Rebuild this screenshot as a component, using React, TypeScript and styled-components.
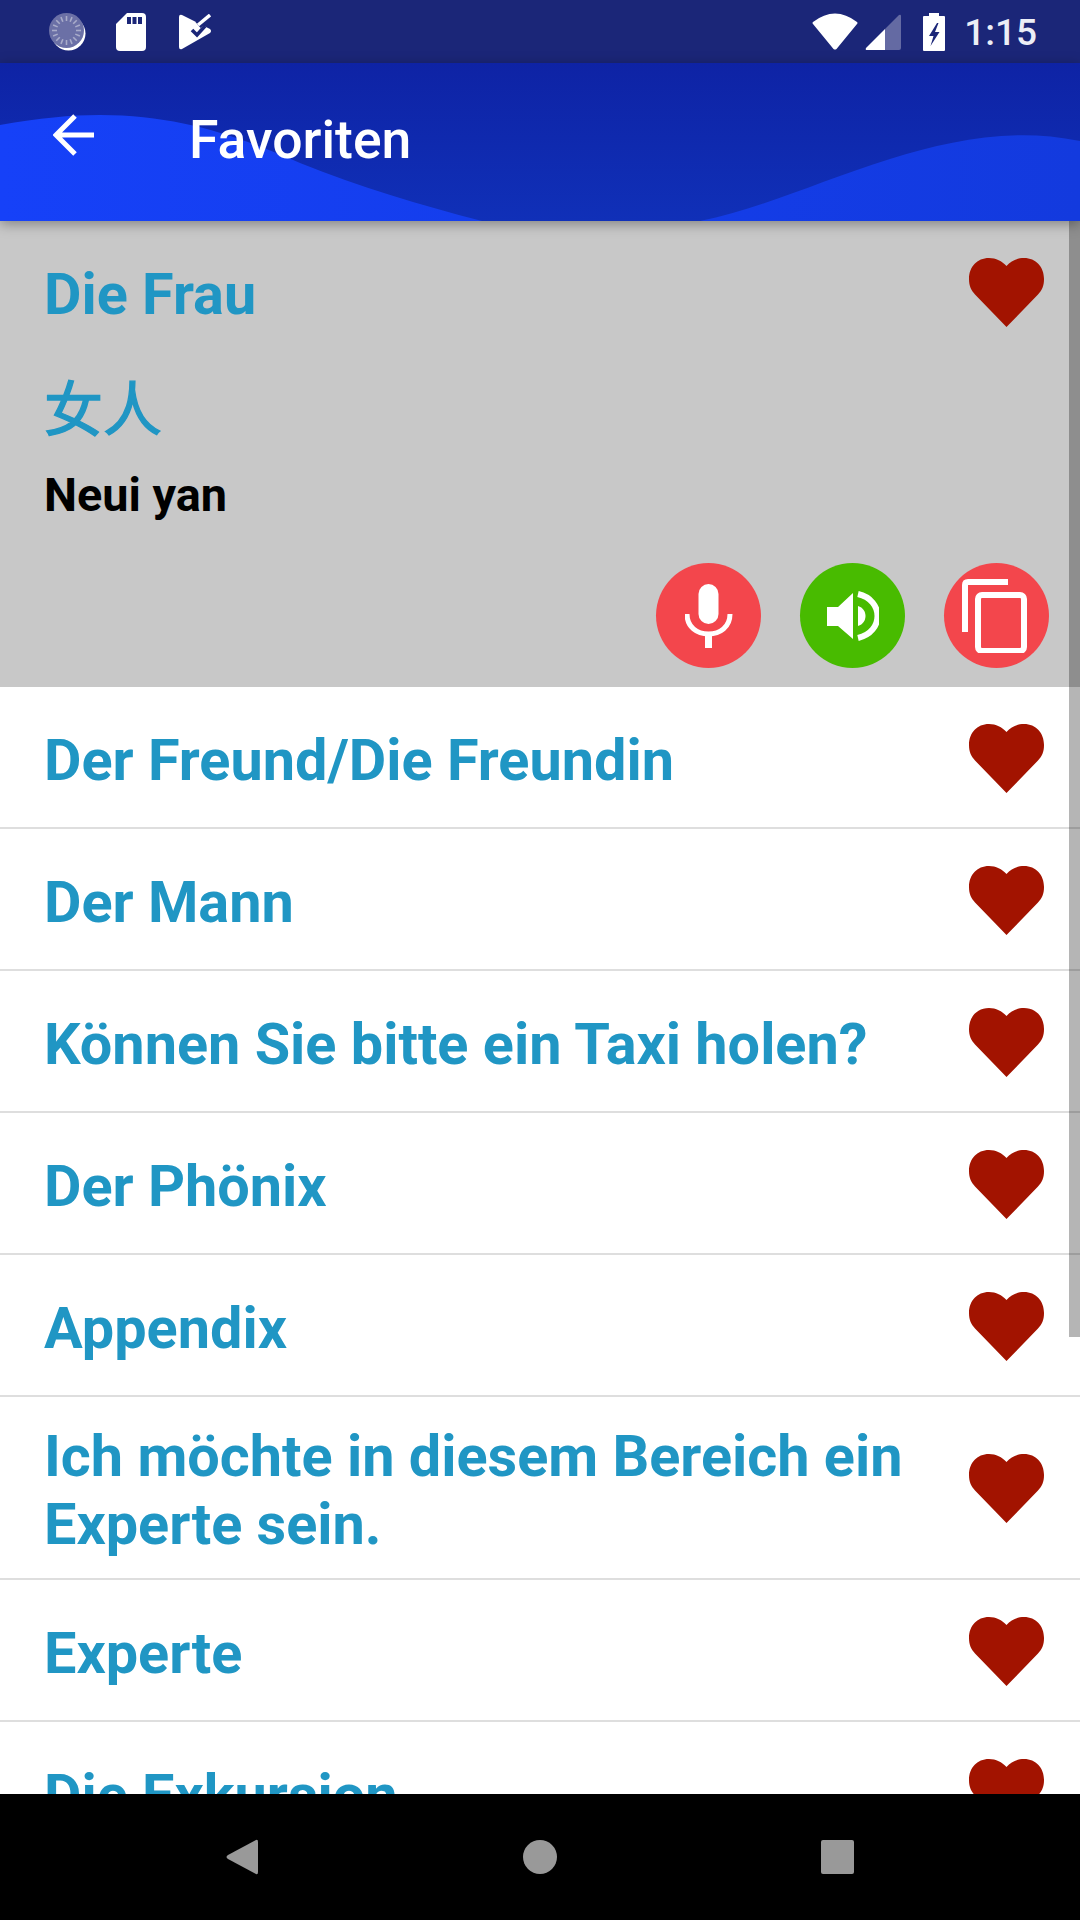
import styled, { createGlobalStyle } from "styled-components";

const GlobalStyle = createGlobalStyle`
  html, body {
    margin: 0;
    padding: 0;
    background: #fff;
    font-family: Roboto, "Liberation Sans", sans-serif;
  }
`;

const phrases = [
  { id: 1, text: "Der Freund/Die Freundin" },
  { id: 2, text: "Der Mann" },
  { id: 3, text: "Können Sie bitte ein Taxi holen?" },
  { id: 4, text: "Der Phönix" },
  { id: 5, text: "Appendix" },
  { id: 6, text: "Ich möchte in diesem Bereich ein Experte sein." },
  { id: 7, text: "Experte" },
  { id: 8, text: "Die Exkursion" },
];

export default function App() {
  return (
    <Phone>
      <GlobalStyle />
      <StatusBar>
        <StatusGroup>
          <SyncIcon />
          <SdIcon />
          <TaskIcon />
        </StatusGroup>
        <StatusRight>
          <WifiIcon />
          <SignalIcon />
          <BatteryIcon />
          <Clock>1:15</Clock>
        </StatusRight>
      </StatusBar>

      <Toolbar>
        <Wave viewBox="0 0 1080 158" preserveAspectRatio="none">
          <defs>
            <linearGradient id="waveLight" x1="0" x2="1" y1="0" y2="0">
              <stop offset="0" stopColor="#1641f8" />
              <stop offset="1" stopColor="#133ade" />
            </linearGradient>
          </defs>
          <path
            d="M0 62 C40 55 70 52 100 52 C180 52 240 74 300 100 C360 124 420 142 482 158 L700 158 C760 146 820 118 890 96 C950 78 1010 64 1080 78 L1080 158 L0 158 Z"
            fill="url(#waveLight)"
          />
        </Wave>
        <BackIcon />
        <Title>Favoriten</Title>
      </Toolbar>

      <List>
        <SelectedCard>
          <PhraseRow $bare>
            <PhraseText>Die Frau</PhraseText>
            <HeartIcon />
          </PhraseRow>
          <Translation>女人</Translation>
          <Romanization>Neui yan</Romanization>
          <Actions>
            <RoundButton $color="#f3464c"><MicIcon /></RoundButton>
            <RoundButton $color="#48bb00"><SpeakerIcon /></RoundButton>
            <RoundButton $color="#f3464c"><CopyIcon /></RoundButton>
          </Actions>
        </SelectedCard>
        {phrases.map(phrase => (
          <PhraseRow key={phrase.id}>
            <PhraseText>{phrase.text}</PhraseText>
            <HeartIcon />
          </PhraseRow>
        ))}
        <ScrollThumb />
      </List>

      <NavBar>
        <svg width="34" height="36" viewBox="0 0 34 36">
          <path d="M31 1 L3 16 Q0 18 3 20 L31 35 Q33 36 33 33 L33 3 Q33 0 31 1 Z" fill="#999" />
        </svg>
        <svg width="34" height="34" viewBox="0 0 34 34">
          <circle cx="17" cy="17" r="17" fill="#999" />
        </svg>
        <svg width="34" height="34" viewBox="0 0 34 34">
          <rect width="33" height="34" rx="2" fill="#999" />
        </svg>
      </NavBar>
    </Phone>
  );
}

function SyncIcon() {
  const ticks = Array.from({ length: 16 }, (_, i) => (i * 360) / 16);
  return (
    <svg width="37" height="38" viewBox="0 0 37 38">
      <circle cx="19.5" cy="20.5" r="17" fill="#fff" />
      <circle cx="17.5" cy="17.5" r="17.5" fill="#6b70a6" />
      {ticks.map(angle => (
        <line
          key={angle}
          x1="17.5"
          y1="3"
          x2="17.5"
          y2="8"
          stroke="#a9acca"
          strokeWidth="1.6"
          transform={`rotate(${angle} 17.5 17.5)`}
        />
      ))}
    </svg>
  );
}

function SdIcon() {
  return (
    <svg width="30" height="38" viewBox="0 0 30 38">
      <path d="M11 0 H26 Q30 0 30 4 V34 Q30 38 26 38 H4 Q0 38 0 34 V11 Z" fill="#fff" />
      <path d="M11 4 H15 V11 H11 Z M16.5 4 H20.5 V11 H16.5 Z M22 4 H26 V11 H22 Z" fill="#1b2678" />
    </svg>
  );
}

function TaskIcon() {
  return (
    <svg width="35" height="36" viewBox="-3 0 35 36">
      <path d="M0 3 Q0 0 3 1 L31 15 Q33 17 31 19 L3 35 Q0 36 0 33 Z" fill="#fff" />
      <path d="M13 16 L18 21 L26 12" fill="none" stroke="#1b2678" strokeWidth="3.6" />
      <path d="M19 11 L31 1" fill="none" stroke="#1b2678" strokeWidth="8" />
      <path d="M19 11 L31 1" fill="none" stroke="#fff" strokeWidth="3.4" />
    </svg>
  );
}

function WifiIcon() {
  return (
    <svg width="46" height="37" viewBox="0 0 46 37">
      <path d="M1 9 Q23 -8 45 9 Q46 10 45 11 L24.5 36 Q23 37 21.5 36 L1 11 Q0 10 1 9 Z" fill="#fff" />
    </svg>
  );
}

function SignalIcon() {
  return (
    <svg width="36" height="36" viewBox="0 0 36 36">
      <path d="M20 15 L34 1 Q36 0 36 2 V34 Q36 36 34 36 H20 Z" fill="#646aa3" />
      <path d="M20 15 V36 H2 Q0 36 1 34 Z" fill="#fff" />
    </svg>
  );
}

function BatteryIcon() {
  return (
    <BatterySvg width="22" height="38" viewBox="0 0 22 38">
      <path d="M6 0 H16 V3 H21 Q22 3 22 4 V37 Q22 38 21 38 H1 Q0 38 0 37 V4 Q0 3 1 3 H6 Z" fill="#fff" />
      <path d="M14 10 L6 23 H10.5 L7.5 33 L16.5 19 H12 L15.5 10 Z" fill="#1b2678" />
    </BatterySvg>
  );
}

function BackIcon() {
  return (
    <BackSvg width="42" height="42" viewBox="0 0 42 42">
      <path d="M41 21 H3 M22 2 L3 21 L22 40" fill="none" stroke="#fff" strokeWidth="5" />
    </BackSvg>
  );
}

function HeartIcon() {
  return (
    <HeartSvg viewBox="0 0 75 69">
      <path
        d="M37.5 8 C33 3 27 0 20 0 C8 0 0 9 0 21 C0 28 2 32 6 36.5 L37.5 69 L69 36.5 C73 32 75 28 75 21 C75 9 67 0 55 0 C48 0 42 3 37.5 8 Z"
        fill="#a21300"
      />
    </HeartSvg>
  );
}

function MicIcon() {
  return (
    <svg width="48" height="64" viewBox="0 0 48 64">
      <rect x="13.5" y="0" width="20" height="40" rx="10" fill="#fff" />
      <path d="M2 30 C2 43 12 50 23.5 50 C35 50 45 43 45 30" fill="none" stroke="#fff" strokeWidth="5" />
      <rect x="20" y="50" width="7" height="14" fill="#fff" />
    </svg>
  );
}

function SpeakerIcon() {
  return (
    <svg width="52" height="50" viewBox="0 0 52 50">
      <path d="M0 16 H11 L26 2 V48 L11 35 H0 Z" fill="#fff" />
      <path d="M31 15 C41 18 41 32 31 35 Z" fill="#fff" />
      <path d="M31 3 C57 9 57 41 31 47" fill="none" stroke="#fff" strokeWidth="6" />
    </svg>
  );
}

function CopyIcon() {
  return (
    <svg width="70" height="74" viewBox="0 0 70 74">
      <path d="M3 53 V6 Q3 3 6 3 H46" fill="none" stroke="#fff" strokeWidth="6" />
      <rect x="16" y="16" width="46" height="56" rx="4" fill="none" stroke="#fff" strokeWidth="6" />
    </svg>
  );
}

const Phone = styled.div`
  width: 1080px;
  height: 1920px;
  display: flex;
  flex-direction: column;
  overflow: hidden;
  background: #fff;
`;

const StatusBar = styled.div`
  height: 63px;
  flex: none;
  display: flex;
  align-items: center;
  justify-content: space-between;
  padding: 0 43px 0 49px;
  background: #1b2678;
`;

const StatusGroup = styled.div`
  display: flex;
  align-items: center;
  gap: 30px;
`;

const StatusRight = styled.div`
  display: flex;
  align-items: center;
  gap: 7px;
`;

const BatterySvg = styled.svg`
  margin-left: 15px;
`;

const Clock = styled.span`
  margin: 2px 0 0 12px;
  font-size: 37px;
  font-weight: 500;
  color: #eceef6;
`;

const Toolbar = styled.header`
  position: relative;
  z-index: 2;
  height: 158px;
  flex: none;
  display: flex;
  align-items: center;
  padding-left: 53px;
  background: linear-gradient(180deg, #0e23a5 0%, #1030b8 100%);
  box-shadow: 0 3px 12px rgba(0, 0, 0, 0.35);
`;

const Wave = styled.svg`
  position: absolute;
  inset: 0;
  width: 100%;
  height: 100%;
`;

const BackSvg = styled.svg`
  position: relative;
  flex: none;
  margin-top: -14px;
`;

const Title = styled.h1`
  position: relative;
  margin: -6px 0 0 94px;
  font-size: 53.5px;
  font-weight: 500;
  color: #fff;
`;

const List = styled.main`
  position: relative;
  flex: 1;
  min-height: 0;
  overflow: hidden;
`;

const ScrollThumb = styled.div`
  position: absolute;
  top: 0;
  right: 0;
  width: 11px;
  height: 1116px;
  background: rgba(0, 0, 0, 0.29);
`;

const SelectedCard = styled.section`
  height: 466px;
  background: #c8c8c8;
`;

const PhraseRow = styled.div<{ $bare?: boolean }>`
  min-height: 142px;
  box-sizing: border-box;
  display: flex;
  align-items: center;
  justify-content: space-between;
  gap: 40px;
  padding: ${({ $bare }) => ($bare ? "20px 36px 20px 44px" : "21px 36px 19px 44px")};
  border-bottom: ${({ $bare }) => ($bare ? "none" : "2px solid #dedede")};
`;

const PhraseText = styled.div`
  padding-top: 5px;
  font-size: 57.6px;
  line-height: 68px;
  font-weight: 700;
  color: #2096c4;
`;

const HeartSvg = styled.svg`
  flex: none;
  width: 75px;
  height: 69px;
`;

const Translation = styled.div`
  margin: 1px 0 0 44px;
  font-family: "Noto Sans CJK SC", sans-serif;
  font-size: 59px;
  line-height: 84px;
  font-weight: 400;
  -webkit-text-stroke: 1.3px #2096c4;
  color: #2096c4;
`;

const Romanization = styled.div`
  margin: 19px 0 0 44px;
  font-size: 46.8px;
  line-height: 56px;
  font-weight: 700;
  color: #000;
`;

const Actions = styled.div`
  display: flex;
  justify-content: flex-end;
  gap: 39px;
  margin-top: 40px;
  padding-right: 31px;
`;

const RoundButton = styled.button<{ $color: string }>`
  width: 105px;
  height: 105px;
  padding: 0;
  border: none;
  border-radius: 50%;
  display: flex;
  align-items: center;
  justify-content: center;
  background: ${({ $color }) => $color};
`;

const NavBar = styled.nav`
  height: 126px;
  flex: none;
  position: relative;
  z-index: 2;
  display: flex;
  align-items: center;
  justify-content: space-between;
  padding: 0 225px;
  background: #000;
`;
